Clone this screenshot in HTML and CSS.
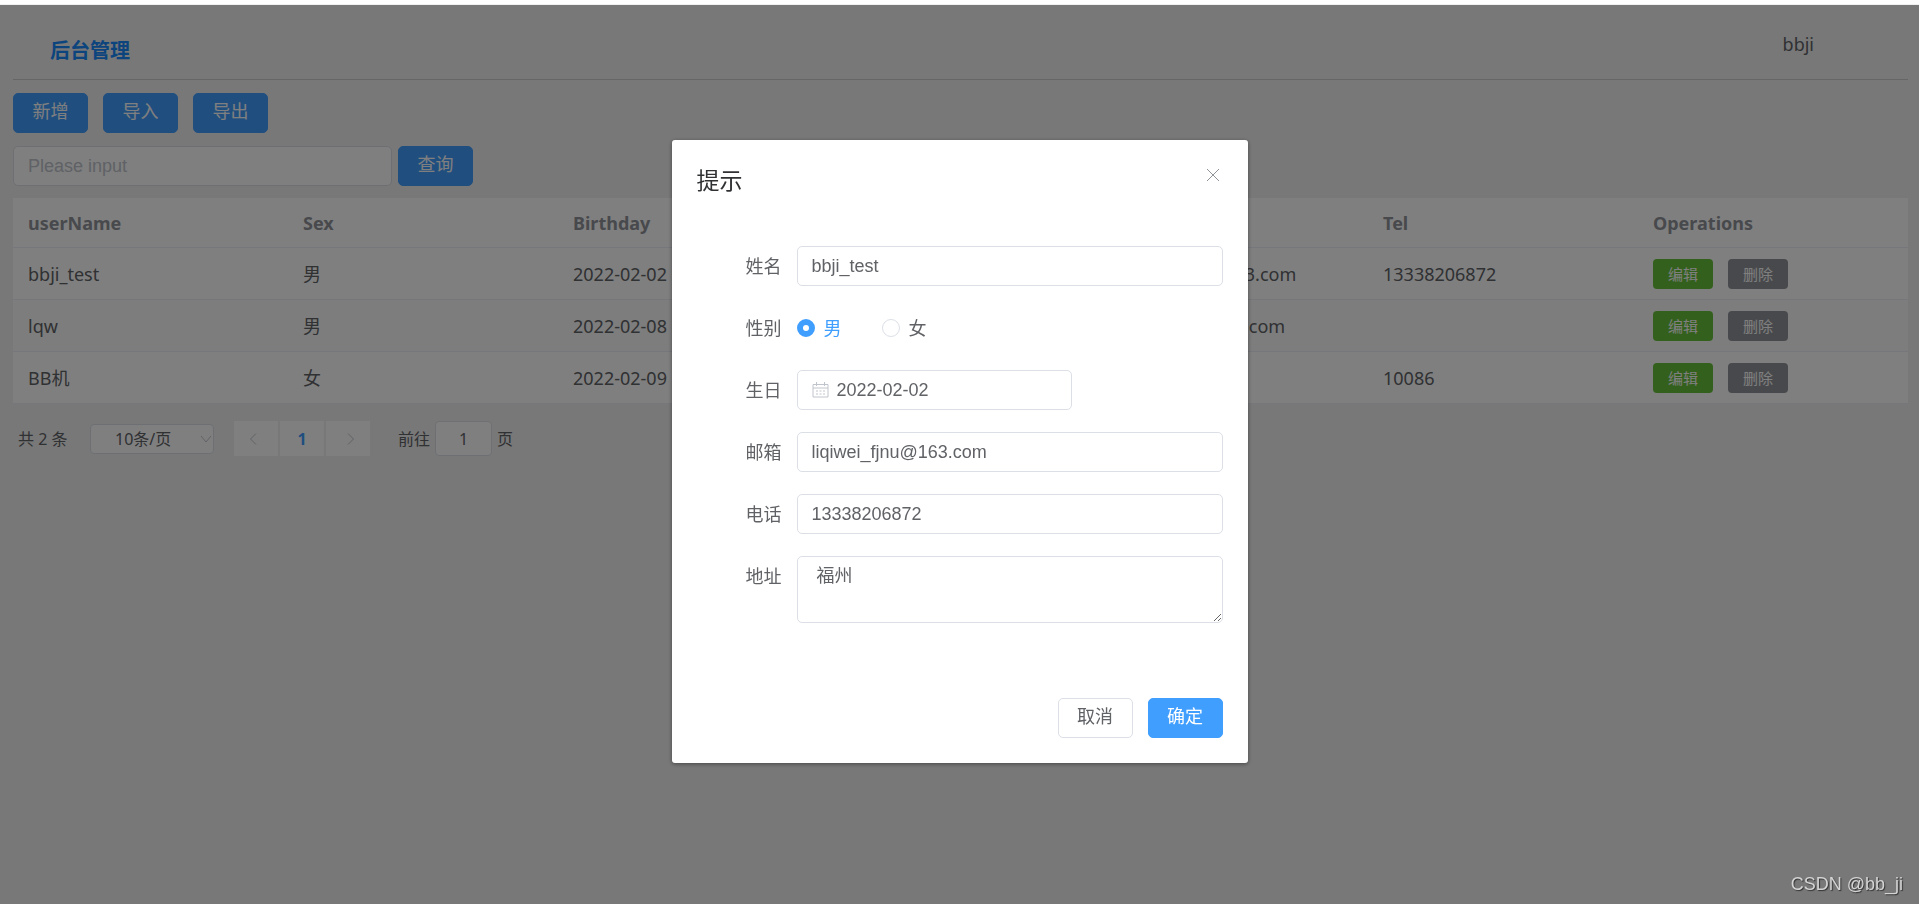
FILE: index.html
```html
<!DOCTYPE html>
<html lang="zh-CN">
<head>
<meta charset="utf-8">
<title>后台管理</title>
<link rel="stylesheet" href="styles.css">
</head>
<body>
<main class="page">
  <header class="header">
    <h1 class="brand">后台管理</h1>
    <span class="user">bbji</span>
  </header>
  <div class="toolbar">
    <button class="btn btn-primary" type="button">新增</button>
    <button class="btn btn-primary" type="button">导入</button>
    <button class="btn btn-primary" type="button">导出</button>
  </div>
  <form class="search">
    <input class="field search-field" type="text" placeholder="Please input" aria-label="Please input">
    <button class="btn btn-primary" type="button">查询</button>
  </form>
  <table class="table">
    <colgroup><col class="col-name"><col><col><col><col><col><col></colgroup>
    <thead>
      <tr><th>userName</th><th>Sex</th><th>Birthday</th><th>Address</th><th>Email</th><th>Tel</th><th>Operations</th></tr>
    </thead>
    <tbody>
      <tr><td>bbji_test</td><td>男</td><td>2022-02-02</td><td>福州</td><td>liqiwei_fjnu@163.com</td><td>13338206872</td>
        <td><div class="ops"><button class="btn-small btn-edit" type="button">编辑</button><button class="btn-small btn-delete" type="button">删除</button></div></td></tr>
      <tr><td>lqw</td><td>男</td><td>2022-02-08</td><td></td><td>103382068@qq.com</td><td></td>
        <td><div class="ops"><button class="btn-small btn-edit" type="button">编辑</button><button class="btn-small btn-delete" type="button">删除</button></div></td></tr>
      <tr><td>BB机</td><td>女</td><td>2022-02-09</td><td></td><td></td><td>10086</td>
        <td><div class="ops"><button class="btn-small btn-edit" type="button">编辑</button><button class="btn-small btn-delete" type="button">删除</button></div></td></tr>
    </tbody>
  </table>
  <nav class="pagination" aria-label="分页">
    <span class="total">共 2 条</span>
    <div class="size">
      <select class="size-select" aria-label="每页条数"><option>10条/页</option></select>
      <svg class="size-arrow" viewBox="0 0 12 12" width="12" height="12"><path d="M1 3l5 6 5-6"/></svg>
    </div>
    <div class="pager">
      <button class="page-btn" type="button" aria-label="上一页"><svg viewBox="0 0 14 14" width="14" height="14"><path d="M7 1.500L1.500 7l5.500 5.500"/></svg></button>
      <button class="page-btn page-current" type="button">1</button>
      <button class="page-btn" type="button" aria-label="下一页"><svg viewBox="0 0 14 14" width="14" height="14"><path d="M7 1.500L12.500 7 7 12.500"/></svg></button>
    </div>
    <label class="jump">前往 <input class="jump-field" type="text" value="1"> 页</label>
  </nav>
</main>

<div class="overlay">
  <section class="dialog" role="dialog" aria-modal="true" aria-labelledby="dialog-title">
    <header class="dialog-header">
      <h2 class="dialog-title" id="dialog-title">提示</h2>
      <button class="close" type="button" aria-label="关闭"><svg viewBox="0 0 14 14" width="14" height="14"><path d="M1 1l12 12M13 1L1 13"/></svg></button>
    </header>
    <form class="form">
      <div class="row">
        <label class="label" for="name">姓名</label>
        <input class="field" id="name" type="text" value="bbji_test">
      </div>
      <div class="row">
        <span class="label" id="sex-label">性别</span>
        <div class="radios" role="radiogroup" aria-labelledby="sex-label">
          <label class="radio"><input type="radio" name="sex" checked><span>男</span></label>
          <label class="radio"><input type="radio" name="sex"><span>女</span></label>
        </div>
      </div>
      <div class="row">
        <label class="label" for="birthday">生日</label>
        <div class="field date">
          <svg class="calendar" viewBox="0 0 17 16" width="17" height="16">
            <path d="M1 2.500h15v12.500H1zM1 6h15M4.500 0v4M12.500 0v4"/>
            <path d="M4 9h2M7.500 9h2M11 9h2M4 12h2M7.500 12h2M11 12h2"/>
          </svg>
          <input class="date-input" id="birthday" type="text" value="2022-02-02">
        </div>
      </div>
      <div class="row">
        <label class="label" for="email">邮箱</label>
        <input class="field" id="email" type="text" value="liqiwei_fjnu@163.com">
      </div>
      <div class="row">
        <label class="label" for="tel">电话</label>
        <input class="field" id="tel" type="text" value="13338206872">
      </div>
      <div class="row">
        <label class="label" for="address">地址</label>
        <textarea class="field area" id="address"> 福州</textarea>
      </div>
    </form>
    <footer class="dialog-footer">
      <button class="btn" type="button">取消</button>
      <button class="btn btn-primary" type="button">确定</button>
    </footer>
  </section>
</div>
<div class="watermark">CSDN @bb_ji</div>
</body>
</html>
```

FILE: styles.css
```css
* { box-sizing: border-box; }

body {
  margin: 0;
  min-height: 100vh;
  border-top: 4px solid #fff;
  background: #f0f0f0;
  color: #606266;
  font: 18px/24px "Noto Sans", "Noto Sans CJK SC", sans-serif;
}

button, input, select, textarea { font: inherit; color: inherit; margin: 0; }
button { cursor: pointer; }
svg { fill: none; stroke: currentColor; }

.page { padding: 0 11px 0 13px; }

.header {
  display: flex;
  justify-content: space-between;
  align-items: flex-start;
  height: 76px;
  padding: 28px 94px 0 37px;
  border-bottom: 1px solid #ccc;
}
.brand {
  margin: 0;
  padding-top: 5px;
  color: #1989fa;
  font-size: 20px;
  line-height: 28px;
  font-weight: 700;
}
.user { color: #606266; }

.toolbar { display: flex; gap: 15px; margin-top: 13px; }
.search { display: flex; gap: 6px; margin: 13px 0 12px; }

.btn {
  width: 75px;
  height: 40px;
  padding: 0 0 4px;
  border: 1px solid #dcdfe6;
  border-radius: 5px;
  background: #fff;
}
.btn-primary { border-color: #409eff; background: #409eff; color: #fff; }

.field {
  flex: 1;
  min-width: 0;
  height: 40px;
  padding: 0 14px;
  border: 1px solid #dcdfe6;
  border-radius: 5px;
  background: #fff;
  font-family: "Liberation Sans", "Noto Sans CJK SC", sans-serif;
}
.search-field { flex: 0 1 379px; }
.search-field::placeholder { color: #c0c4cc; opacity: 1; }

.table {
  width: 100%;
  table-layout: fixed;
  border-collapse: separate;
  border-spacing: 0;
  background: #fff;
}
.col-name { width: 275px; }
.table th, .table td {
  height: 52px;
  padding: 0 15px;
  border-bottom: 1px solid #ebeef5;
  text-align: left;
}
.table th { height: 50px; color: #909399; font-weight: 700; }
.table tbody tr:nth-child(2) { background: #fafafa; }

.ops { display: flex; gap: 15px; }
.btn-small {
  width: 60px;
  height: 30px;
  padding: 0;
  border: 0;
  border-radius: 4px;
  color: #fff;
  font-size: 15px;
}
.btn-edit { background: #67c23a; }
.btn-delete { background: #909399; }

.pagination {
  display: flex;
  align-items: center;
  gap: 20px;
  padding: 17px 5px;
  font-size: 16px;
}
.total { width: 52px; }
.size { position: relative; display: flex; }
.size-select {
  width: 124px;
  height: 30px;
  padding: 0 24px;
  border: 1px solid #dcdfe6;
  border-radius: 4px;
  background: #fff;
  appearance: none;
}
.size-arrow { position: absolute; right: 2px; top: 9px; color: #c0c4cc; }
.pager { display: flex; gap: 2px; }
.page-btn {
  display: grid;
  place-items: center;
  width: 44px;
  height: 35px;
  padding: 0;
  border: 0;
  background: #fff;
  color: #c0c4cc;
}
.page-current { color: #409eff; font-weight: 700; }
.jump { display: flex; align-items: center; gap: 5px; margin-left: 8px; }
.jump-field {
  width: 57px;
  height: 35px;
  padding: 0;
  border: 1px solid #dcdfe6;
  border-radius: 4px;
  background: #fff;
  text-align: center;
}

.overlay {
  position: fixed;
  inset: 5px 0 0;
  overflow: auto;
  background: rgba(0, 0, 0, .5);
}
.dialog {
  width: 30%;
  min-width: 576px;
  margin: 135px auto 62px;
  border-radius: 3px;
  background: #fff;
  box-shadow: 0 1px 4px rgba(0, 0, 0, .4);
}
.dialog-header {
  display: flex;
  justify-content: space-between;
  padding: 25px 25px 12px;
}
.dialog-title { margin: 0; color: #303133; font-size: 23px; line-height: 30px; font-weight: 400; }
.close {
  display: grid;
  place-items: center;
  width: 20px;
  height: 20px;
  padding: 0;
  border: 0;
  background: none;
  color: #909399;
}
.form {
  display: grid;
  gap: 22px;
  padding: 39px 25px 40px;
}
.row { display: flex; align-items: flex-start; }
.label { flex: none; width: 100px; padding-right: 15px; line-height: 40px; text-align: right; }
.radios { display: flex; gap: 40px; height: 40px; align-items: center; }
.radio { display: flex; align-items: center; gap: 9px; }
.radio input {
  appearance: none;
  width: 18px;
  height: 18px;
  border: 1px solid #dcdfe6;
  border-radius: 50%;
  background: #fff;
}
.radio input:checked { border: 6px solid #409eff; }
.radio input:checked + span { color: #409eff; }
.date { display: flex; flex: 0 1 275px; align-items: center; gap: 8px; }
.calendar { flex: none; color: #c0c4cc; }
.date-input { flex: 1; min-width: 0; padding: 0; border: 0; outline: 0; background: none; }
.area { height: 67px; padding: 7px 14px; resize: vertical; }
.dialog-footer { display: flex; justify-content: flex-end; gap: 15px; padding: 35px 25px 25px; }

.watermark {
  position: fixed;
  right: 16px;
  bottom: 8px;
  color: #d4d4d4;
  font-family: "Liberation Sans", sans-serif;
  text-shadow: 1px 1px 1px #333;
}
```
